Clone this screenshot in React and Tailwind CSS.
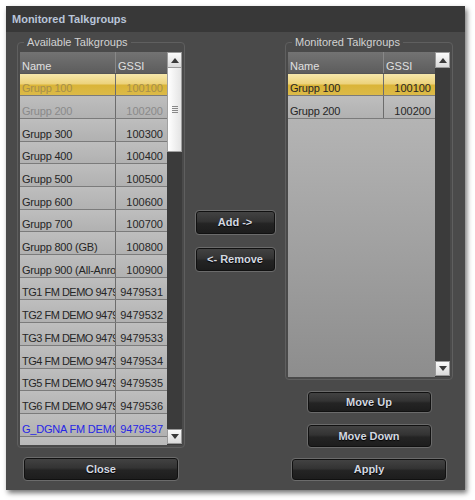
// App.jsx — Monitored Talkgroups dialog
const available = [
  { name: 'Grupp 100', gssi: '100100', state: 'sel' },
  { name: 'Grupp 200', gssi: '100200', state: 'dim' },
  { name: 'Grupp 300', gssi: '100300' },
  { name: 'Grupp 400', gssi: '100400' },
  { name: 'Grupp 500', gssi: '100500' },
  { name: 'Grupp 600', gssi: '100600' },
  { name: 'Grupp 700', gssi: '100700' },
  { name: 'Grupp 800 (GB)', gssi: '100800' },
  { name: 'Grupp 900 (All-Anrop)', gssi: '100900' },
  { name: 'TG1 FM DEMO 9479531', gssi: '9479531' },
  { name: 'TG2 FM DEMO 9479532', gssi: '9479532' },
  { name: 'TG3 FM DEMO 9479533', gssi: '9479533' },
  { name: 'TG4 FM DEMO 9479534', gssi: '9479534' },
  { name: 'TG5 FM DEMO 9479535', gssi: '9479535' },
  { name: 'TG6 FM DEMO 9479536', gssi: '9479536' },
  { name: 'G_DGNA FM DEMO 9479537', gssi: '9479537', state: 'blue' },
  { name: '', gssi: '' },
];

const monitored = [
  { name: 'Grupp 100', gssi: '100100', state: 'selDark' },
  { name: 'Grupp 200', gssi: '100200' },
];

const font = { fontFamily: '"Liberation Sans", Arial, sans-serif' };

function Arrow({ up }) {
  return (
    <svg width="8" height="5" viewBox="0 0 8 5">
      <polygon points={up ? '0,5 8,5 4,0' : '0,0 8,0 4,5'} fill="#3a3a3a" />
    </svg>
  );
}

function Row({ row }) {
  const sel = row.state === 'sel' || row.state === 'selDark';
  const bg = sel
    ? 'bg-[linear-gradient(#f6e7ab,#ecd27a_48%,#dab437_52%,#dcba48)]'
    : 'bg-[linear-gradient(#bebebe,#b1b1b1)]';
  const color =
    row.state === 'sel' ? 'text-[#a68f4c]'
    : row.state === 'dim' ? 'text-[#8a8a8a]'
    : row.state === 'blue' ? 'text-[#2626e6]'
    : 'text-[#262626]';
  // uppercase names are narrower in the original font
  const tight = /^[A-Z]{2}/.test(row.name) ? 'tracking-[-0.5px]' : 'tracking-[-0.2px]';
  return (
    <div className={`flex h-[22.7px] shrink-0 border-b border-[#7b7b7b] leading-[11px] ${color}`}>
      <div className={`flex-1 min-w-0 flex items-end pl-[2px] pb-[1px] overflow-hidden whitespace-nowrap border-r border-[#6c6c6c] ${tight} ${bg}`}>
        {row.name}
      </div>
      <div className={`w-[51px] flex items-end justify-end pr-[4px] pb-[1px] ${bg}`}>{row.gssi}</div>
    </div>
  );
}

function Table({ rows, height, empty, thumb }) {
  return (
    <div className="flex overflow-hidden text-[11px] leading-[13px]" style={{ height }}>
      <div className="flex-1 min-w-0 flex flex-col">
        <div className="flex h-[21.6px] shrink-0 leading-[11px] text-[#e0e0e0] bg-[linear-gradient(#737373,#5d5d5d)] border-b border-[#555]">
          <div className="flex-1 flex items-end pl-[2px] pb-[1px] border-r border-[#888]">Name</div>
          <div className="w-[51px] flex items-end pl-[2px] pb-[1px]">GSSI</div>
        </div>
        {rows.map((r, i) => <Row key={i} row={r} />)}
        {empty && <div className="flex-1 bg-[linear-gradient(#b4b4b4,#8d8d8d)]" />}
      </div>
      <div className="w-[15px] flex flex-col bg-[#3b3b3b]">
        <div className="h-[16px] flex items-center justify-center bg-[linear-gradient(#fbfbfb,#dadada)] border border-[#9a9a9a]">
          <Arrow up />
        </div>
        {thumb && (
          <div className="h-[84px] flex items-center justify-center bg-[linear-gradient(90deg,#ffffff,#e4e4e4)] border-x border-b border-[#a0a0a0]">
            <div className="flex flex-col gap-px">
              <div className="w-[6px] h-px bg-[#888]" />
              <div className="w-[6px] h-px bg-[#888]" />
              <div className="w-[6px] h-px bg-[#888]" />
              <div className="w-[6px] h-px bg-[#888]" />
            </div>
          </div>
        )}
        <div className="flex-1" />
        <div className="h-[15px] mb-px flex items-center justify-center bg-[linear-gradient(#fbfbfb,#dadada)] border border-[#9a9a9a]">
          <Arrow />
        </div>
      </div>
    </div>
  );
}

function Group({ label, children }) {
  return (
    <fieldset className="w-[168px] min-w-0 border border-[#5f5f5f] rounded-[4px] px-[2px] pt-[3px] pb-[2px]">
      <legend className="ml-[4px] px-[3px] text-[11px] leading-[13px] text-[#d2d2d2] font-light">{label}</legend>
      {children}
    </fieldset>
  );
}

function Btn({ children, className }) {
  return (
    <button
      className={`flex items-center justify-center rounded-[4px] border border-[#6b6b6b] bg-[linear-gradient(#444,#333_45%,#242424_55%,#1c1c1c)] shadow-[inset_0_0_0_1px_#111] text-[11px] font-bold text-[#d3d8e0] [text-shadow:0_1px_1px_#000] ${className}`}
    >
      {children}
    </button>
  );
}

export default function App() {
  return (
    <div className="w-[475px] h-[500px] bg-white pt-[6px] pl-[6px]" style={font}>
      <div className="w-[459px] h-[484px] bg-[#4a4a4a] flex flex-col shadow-[2px_3px_5px_rgba(0,0,0,0.55)]">
        {/* title bar */}
        <div className="h-[26px] shrink-0 bg-[#383838] flex items-center pl-[6px] text-[11px] font-bold text-[#b9c5d9]">
          Monitored Talkgroups
        </div>

        <div className="flex pl-[11px] pt-[4px]">
          {/* left */}
          <div className="flex flex-col">
            <Group label="Available Talkgroups">
              <Table rows={available} height={393} thumb />
            </Group>
            <Btn className="mt-[9px] ml-[6px] w-[156px] h-[24px]">Close</Btn>
          </div>

          {/* middle */}
          <div className="w-[100px] flex flex-col items-center pt-[174px] gap-[12px]">
            <Btn className="w-[81px] h-[25px]">Add -&gt;</Btn>
            <Btn className="w-[81px] h-[25px]">&lt;- Remove</Btn>
          </div>

          {/* right */}
          <div className="flex flex-col items-center">
            <Group label="Monitored Talkgroups">
              <Table rows={monitored} height={325} empty />
            </Group>
            <Btn className="mt-[11px] w-[125px] h-[22px]">Move Up</Btn>
            <Btn className="mt-[11px] w-[125px] h-[24px]">Move Down</Btn>
            <Btn className="mt-[10px] w-[156px] h-[23px]">Apply</Btn>
          </div>
        </div>
      </div>
    </div>
  );
}
